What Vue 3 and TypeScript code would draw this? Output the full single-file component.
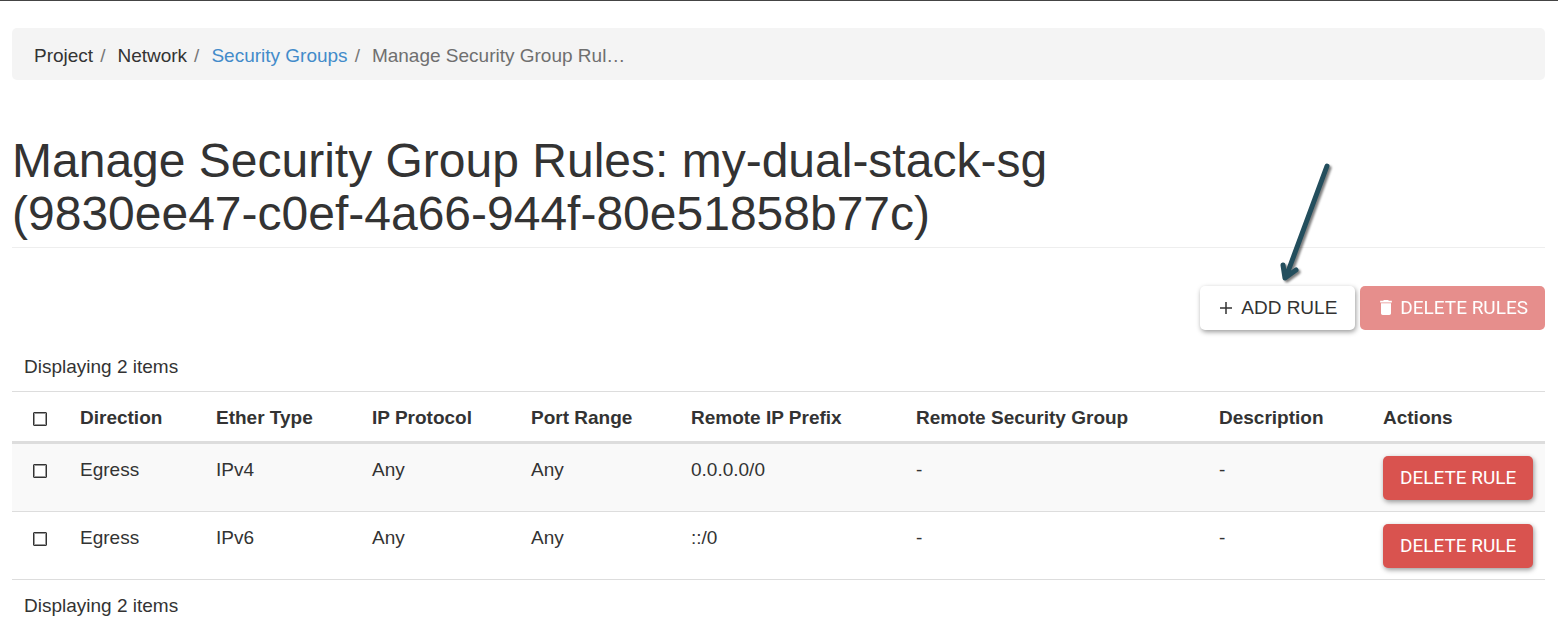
<script setup lang="ts">
import { ref } from 'vue'

interface Rule {
  id: number
  direction: string
  etherType: string
  protocol: string
  portRange: string
  prefix: string
  remoteGroup: string
  description: string
}

const rules = ref<Rule[]>([
  { id: 1, direction: 'Egress', etherType: 'IPv4', protocol: 'Any', portRange: 'Any', prefix: '0.0.0.0/0', remoteGroup: '-', description: '-' },
  { id: 2, direction: 'Egress', etherType: 'IPv6', protocol: 'Any', portRange: 'Any', prefix: '::/0', remoteGroup: '-', description: '-' },
])
const selected = ref<number[]>([])

function toggleAll(event: Event) {
  const on = (event.target as HTMLInputElement).checked
  selected.value = on ? rules.value.map((r) => r.id) : []
}
</script>

<template>
  <div class="page">
    <nav class="crumbs" aria-label="Breadcrumb">
      <ol>
        <li>Project</li>
        <li>Network</li>
        <li><a href="#security-groups">Security Groups</a></li>
        <li class="current">Manage Security Group Rul…</li>
      </ol>
    </nav>

    <header class="title">
      <h1>Manage Security Group Rules: my-dual-stack-sg<br />(9830ee47-c0ef-4a66-944f-80e51858b77c)</h1>
    </header>

    <div class="toolbar">
      <button type="button" class="btn btn-add">
        <svg class="plus" viewBox="0 0 12 12" aria-hidden="true"><path d="M6 0V12M0 6H12" /></svg>
        ADD RULE
        <svg class="arrow" viewBox="0 0 60 130" aria-hidden="true">
          <path d="M47 8L6 119M3 107L5 120L16 112" />
        </svg>
      </button>
      <button type="button" class="btn btn-danger" :disabled="selected.length === 0">
        <svg class="trash" viewBox="5 3 14 18" aria-hidden="true">
          <path d="M6 19c0 1.100.9 2 2 2h8c1.100 0 2-.9 2-2V7H6v12zM19 4h-3.500l-1-1h-5l-1 1H5v2h14V4z" />
        </svg>
        DELETE RULES
      </button>
    </div>

    <p class="count">Displaying {{ rules.length }} items</p>
    <table>
      <colgroup>
        <col class="c-check" />
        <col class="c-direction" />
        <col class="c-ether" />
        <col class="c-protocol" />
        <col class="c-port" />
        <col class="c-prefix" />
        <col class="c-group" />
        <col class="c-desc" />
        <col class="c-actions" />
      </colgroup>
      <thead>
        <tr>
          <th class="check"><input type="checkbox" aria-label="Select all rules" @change="toggleAll" /></th>
          <th>Direction</th>
          <th>Ether Type</th>
          <th>IP Protocol</th>
          <th>Port Range</th>
          <th>Remote IP Prefix</th>
          <th>Remote Security Group</th>
          <th>Description</th>
          <th>Actions</th>
        </tr>
      </thead>
      <tbody>
        <tr v-for="rule in rules" :key="rule.id">
          <td class="check"><input v-model="selected" type="checkbox" :value="rule.id" :aria-label="`Select ${rule.etherType} rule`" /></td>
          <td>{{ rule.direction }}</td>
          <td>{{ rule.etherType }}</td>
          <td>{{ rule.protocol }}</td>
          <td>{{ rule.portRange }}</td>
          <td>{{ rule.prefix }}</td>
          <td>{{ rule.remoteGroup }}</td>
          <td>{{ rule.description }}</td>
          <td class="actions"><button type="button" class="btn btn-danger">DELETE RULE</button></td>
        </tr>
      </tbody>
    </table>
    <p class="count count-bottom">Displaying {{ rules.length }} items</p>
  </div>
</template>

<style>
body {
  margin: 0;
  background: #fff;
}
</style>

<style scoped>
.page {
  box-sizing: border-box;
  border-top: 1px solid #444;
  padding: 27px 13px 0 12px;
  color: #333;
  font: 19px/26px "Liberation Sans", Arial, sans-serif;
}
.crumbs {
  padding: 15px 22px 11px;
  border-radius: 5px;
  background: #f4f4f4;
}
.crumbs ol {
  display: flex;
  margin: 0;
  padding: 0;
  list-style: none;
}
.crumbs li + li::before {
  content: "/";
  padding: 0 12px 0 7px;
  color: #777;
}
.crumbs a {
  color: #428bca;
  text-decoration: none;
}
.crumbs .current {
  color: #6f6f6f;
}
.title {
  margin-top: 54px;
  padding-bottom: 7px;
  border-bottom: 1px solid #eee;
}
h1 {
  margin: 0;
  font-size: 48px;
  font-weight: 400;
  line-height: 53px;
}
.toolbar {
  display: flex;
  justify-content: flex-end;
  gap: 5px;
  margin-top: 38px;
}
.btn {
  position: relative;
  display: inline-flex;
  align-items: center;
  justify-content: center;
  height: 44px;
  padding: 0 17px;
  border: 0;
  border-radius: 5px;
  font: 19px/26px Roboto, "Liberation Sans", sans-serif;
  white-space: nowrap;
  box-shadow: 1px 2px 5px rgba(0, 0, 0, 0.4);
}
.btn-add {
  padding: 0 18px 0 20px;
  background: #fff;
  color: #333;
  font-family: "Liberation Sans", Arial, sans-serif;
}
.btn-danger {
  background: #d9534f;
  color: #fff;
}
.btn:disabled {
  padding-left: 20px;
  opacity: 0.65;
  box-shadow: none;
}
.plus {
  width: 12px;
  height: 12px;
  margin-right: 9px;
  fill: none;
  stroke: #333;
  stroke-width: 1.5;
}
.trash {
  width: 12px;
  height: 15px;
  margin: 0 8px 2px 0;
  fill: #fff;
}
.arrow {
  position: absolute;
  left: 80px;
  bottom: 42px;
  width: 60px;
  height: 130px;
  fill: none;
  stroke: #234e5d;
  stroke-width: 5;
  stroke-linecap: round;
  stroke-linejoin: round;
  filter: drop-shadow(2px 2px 1px rgba(0, 0, 0, 0.5));
  pointer-events: none;
}
.count {
  margin: 0;
  padding: 24px 12px 11px;
}
.count-bottom {
  padding-top: 13px;
}
table {
  width: 100%;
  table-layout: fixed;
  border-collapse: separate;
  border-spacing: 0;
  border-bottom: 1px solid #ddd;
}
.c-check { width: 56px; }
.c-direction { width: 136px; }
.c-ether { width: 156px; }
.c-protocol { width: 159px; }
.c-port { width: 160px; }
.c-prefix { width: 225px; }
.c-group { width: 303px; }
.c-desc { width: 164px; }
.c-actions { width: 174px; }
th,
td {
  padding: 13px 0 10px 12px;
  text-align: left;
  vertical-align: top;
}
th {
  border-top: 1px solid #ddd;
  border-bottom: 3px solid #ddd;
  font-weight: 700;
  white-space: nowrap;
}
.actions {
  padding: 12px 12px 11px;
}
.actions .btn {
  display: flex;
}
tbody tr:nth-child(odd) {
  background: #f9f9f9;
}
tbody tr + tr td {
  border-top: 1px solid #ddd;
}
.check {
  padding-left: 21px;
}
input {
  display: block;
  appearance: none;
  box-sizing: border-box;
  width: 14px;
  height: 14px;
  margin: 7px 0 0;
  border: 1px solid #333;
  border-radius: 1px;
  background: #fff;
  box-shadow: inset 0 0 0 1px #999;
}
input:checked {
  background: #428bca;
}
</style>
